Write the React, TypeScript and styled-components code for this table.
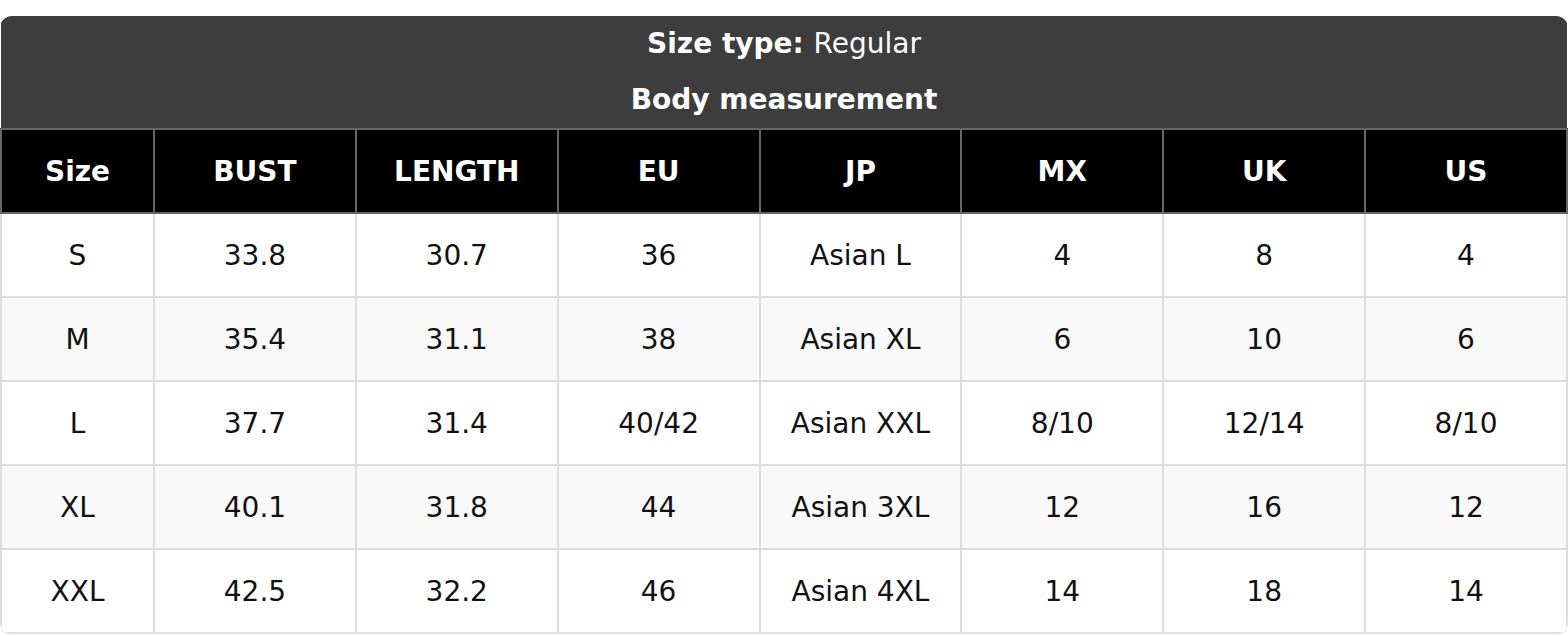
import styled, { createGlobalStyle } from "styled-components";

const GlobalStyle = createGlobalStyle`
    body {
        margin: 0;
        background: #fff;
        font-family: "DejaVu Sans", Verdana, sans-serif;
    }
`;

const Page = styled.div`
    padding-top: 16px;
`;

const ChartWrap = styled.div`
    width: 100%;
    border-radius: 12px;
    overflow: hidden;
    box-shadow: 0 1px 1px rgba(0, 0, 0, 0.08);
`;

const SizeTable = styled.table`
    width: 100%;
    border-collapse: collapse;
    table-layout: fixed;
    font-size: 28px;
    color: #111;
`;

const SizeCol = styled.col`
    width: 153px;
`;

const TitleCell = styled.th`
    background-color: #3d3d3d;
    color: #fff;
    height: 56px;
    padding: 0;
    text-align: center;
    vertical-align: middle;
    font-weight: bold;
    line-height: 56px;
`;

const Plain = styled.span`
    font-weight: normal;
`;

const HeadCell = styled.th`
    background-color: #000;
    color: #fff;
    border: 2px solid #666;
    height: 82px;
    padding: 0;
    text-align: center;
    font-weight: bold;
`;

const BodyRow = styled.tr`
    background-color: #fff;

    &:nth-child(even) {
        background-color: #f9f9f9;
    }
`;

const BodyCell = styled.td`
    border: 2px solid #ddd;
    height: 82px;
    padding: 0;
    text-align: center;
    vertical-align: middle;
`;

const columns = ["Size", "BUST", "LENGTH", "EU", "JP", "MX", "UK", "US"];

const rows = [
    ["S", "33.8", "30.7", "36", "Asian L", "4", "8", "4"],
    ["M", "35.4", "31.1", "38", "Asian XL", "6", "10", "6"],
    ["L", "37.7", "31.4", "40/42", "Asian XXL", "8/10", "12/14", "8/10"],
    ["XL", "40.1", "31.8", "44", "Asian 3XL", "12", "16", "12"],
    ["XXL", "42.5", "32.2", "46", "Asian 4XL", "14", "18", "14"],
];

const App: React.FC = () => {
    return (
        <>
            <GlobalStyle />
            <Page>
                <ChartWrap>
                    <SizeTable>
                        <colgroup>
                            <SizeCol />
                            {columns.slice(1).map((c) => <col key={c} />)}
                        </colgroup>
                        <thead>
                            <tr>
                                <TitleCell colSpan={8}>
                                    Size type: <Plain>Regular</Plain>
                                </TitleCell>
                            </tr>
                            <tr>
                                <TitleCell colSpan={8}>Body measurement</TitleCell>
                            </tr>
                            <tr>
                                {columns.map((c) => (
                                    <HeadCell key={c}>{c}</HeadCell>
                                ))}
                            </tr>
                        </thead>
                        <tbody>
                            {rows.map((r) => (
                                <BodyRow key={r[0]}>
                                    {r.map((v, i) => (
                                        <BodyCell key={i}>{v}</BodyCell>
                                    ))}
                                </BodyRow>
                            ))}
                        </tbody>
                    </SizeTable>
                </ChartWrap>
            </Page>
        </>
    );
};

export default App;
